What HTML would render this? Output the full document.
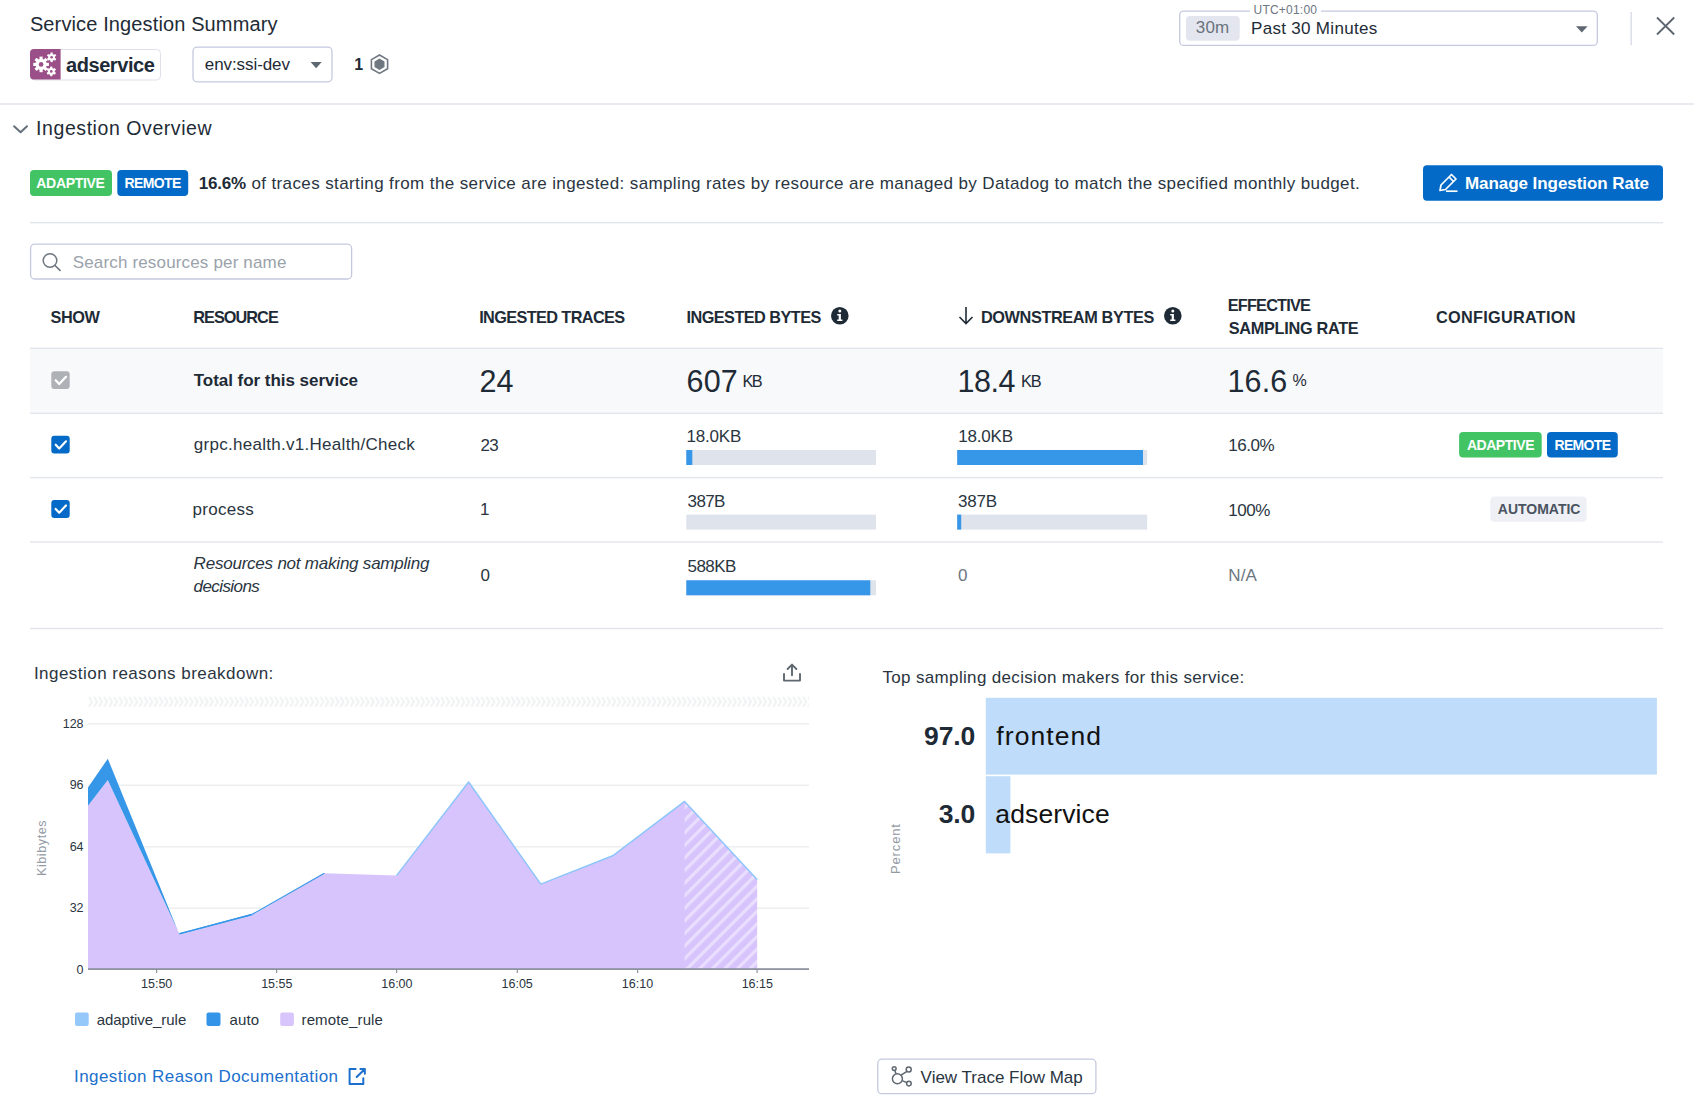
<!DOCTYPE html>
<html><head><meta charset="utf-8">
<style>
html,body{margin:0;padding:0;background:#fff;}
body{width:1694px;height:1114px;position:relative;overflow:hidden;font-family:"Liberation Sans",sans-serif;}
.t{position:absolute;white-space:nowrap;line-height:1;}
svg.bg{position:absolute;left:0;top:0;}
</style></head><body>
<svg class="bg" width="1694" height="1114" viewBox="0 0 1694 1114">
<defs>
  <pattern id="hatch" patternUnits="userSpaceOnUse" width="8.9" height="10" patternTransform="translate(684.6 969) rotate(45)">
    <rect width="8.9" height="10" fill="#d7c4fc"/>
    <rect x="0" y="0" width="3.2" height="10" fill="#e9defd"/>
  </pattern>
  <pattern id="chev" patternUnits="userSpaceOnUse" width="5.03" height="11" x="88" y="696.3">
    <path d="M0.8 0.5 L4 5.5 L0.8 10.5" fill="none" stroke="#f1f2f3" stroke-width="2.2"/>
  </pattern>
</defs>
<!-- header -->
<rect x="30.5" y="49.5" width="130" height="30.5" rx="4" fill="#fff" stroke="#dfe1ea"/>
<path d="M34 49 H60.6 V79.6 H34 A4 4 0 0 1 30 75.6 V53 A4 4 0 0 1 34 49 Z" fill="#9a4f88"/>
<g fill="#fff">
  <circle cx="41.1" cy="64.4" r="5.6"/>
  <g transform="translate(41.1 64.4)">
    <rect x="-1.6" y="-7.8" width="3.2" height="15.6"/>
    <rect x="-1.6" y="-7.8" width="3.2" height="15.6" transform="rotate(45)"/>
    <rect x="-1.6" y="-7.8" width="3.2" height="15.6" transform="rotate(90)"/>
    <rect x="-1.6" y="-7.8" width="3.2" height="15.6" transform="rotate(135)"/>
  </g>
  <circle cx="51.6" cy="57.3" r="3.4"/>
  <g transform="translate(51.6 57.3)">
    <rect x="-1.1" y="-4.8" width="2.2" height="9.6"/>
    <rect x="-1.1" y="-4.8" width="2.2" height="9.6" transform="rotate(60)"/>
    <rect x="-1.1" y="-4.8" width="2.2" height="9.6" transform="rotate(120)"/>
  </g>
  <circle cx="51.3" cy="71.4" r="3.4"/>
  <g transform="translate(51.3 71.4)">
    <rect x="-1.1" y="-4.8" width="2.2" height="9.6"/>
    <rect x="-1.1" y="-4.8" width="2.2" height="9.6" transform="rotate(60)"/>
    <rect x="-1.1" y="-4.8" width="2.2" height="9.6" transform="rotate(120)"/>
  </g>
</g>
<circle cx="41.1" cy="64.4" r="2.3" fill="#9a4f88"/>
<circle cx="51.6" cy="57.3" r="1.3" fill="#9a4f88"/>
<circle cx="51.3" cy="71.4" r="1.3" fill="#9a4f88"/>

<rect x="193" y="47.2" width="139" height="34.6" rx="4" fill="#fff" stroke="#c5c9df" stroke-width="1.3"/>
<path d="M310.6 62 H321.7 L316.15 68.3 Z" fill="#5f6770"/>
<path d="M379.5 55 L387.6 59.6 V68.8 L379.5 73.4 L371.4 68.8 V59.6 Z" fill="none" stroke="#6f7780" stroke-width="1.6"/>
<path d="M379.5 58.6 L384.5 61.5 V67 L379.5 69.9 L374.5 67 V61.5 Z" fill="#6f7780"/>

<rect x="1179.7" y="11.1" width="417.6" height="34.3" rx="4" fill="#fff" stroke="#c5c9df" stroke-width="1.3"/>
<rect x="1250" y="8" width="71" height="6" fill="#fff"/>
<rect x="1186" y="16" width="53.7" height="24.7" rx="4" fill="#e3e6ee"/>
<path d="M1576 26.2 H1587.6 L1581.8 32.4 Z" fill="#5f6770"/>
<rect x="1630.4" y="12" width="1.6" height="33.4" fill="#dfe1ea"/>
<path d="M1657 17.5 L1674.2 34.5 M1674.2 17.5 L1657 34.5" stroke="#5d6670" stroke-width="1.8" fill="none"/>
<rect x="0" y="103.2" width="1694" height="1.6" fill="#e3e5ec"/>

<!-- section -->
<path d="M14.1 126.2 L20.6 132.3 L27 126.2" fill="none" stroke="#66707a" stroke-width="2" stroke-linecap="round" stroke-linejoin="round"/>
<rect x="30" y="170" width="82" height="26" rx="4" fill="#42c465"/>
<rect x="117.3" y="170" width="70.9" height="26" rx="4" fill="#036bc7"/>
<rect x="1423" y="165.2" width="240" height="35.6" rx="4" fill="#036bc7"/>
<g fill="none" stroke="#fff" stroke-width="1.7" stroke-linejoin="round">
  <path d="M1440 190.5 L1441 185 L1451.5 174.5 L1456 179 L1445.5 189.5 Z"/>
  <path d="M1449 177 L1453.5 181.5"/>
  <path d="M1446 191.2 H1457.5"/>
</g>
<rect x="30" y="222" width="1633" height="1.4" fill="#e3e5ec"/>
<rect x="30.6" y="244.2" width="321" height="34.8" rx="4" fill="#fff" stroke="#c5c9df" stroke-width="1.3"/>
<circle cx="50" cy="260.5" r="6.8" fill="none" stroke="#6f7780" stroke-width="1.5"/>
<path d="M55 265.5 L60 270.3" stroke="#6f7780" stroke-width="1.7" stroke-linecap="round"/>

<!-- table -->
<rect x="30" y="347.6" width="1633" height="1.4" fill="#e3e5ec"/>
<rect x="30" y="349" width="1633" height="64" fill="#f8f9fb"/>
<rect x="30" y="412.6" width="1633" height="1.4" fill="#e3e5ec"/>
<rect x="30" y="476.9" width="1633" height="1.4" fill="#e3e5ec"/>
<rect x="30" y="541.3" width="1633" height="1.4" fill="#e3e5ec"/>
<rect x="30" y="627.8" width="1633" height="1.4" fill="#e3e5ec"/>
<!-- info icons -->
<g>
  <circle cx="839.8" cy="315.8" r="8.8" fill="#1e2b36"/>
  <circle cx="1172.8" cy="315.8" r="8.8" fill="#1e2b36"/>
  <g fill="#fff">
    <circle cx="839.8" cy="311" r="1.5"/><path d="M837.2 314 H840.9 V319.6 H842.4 V321 H837.2 V319.6 H838.7 V315.4 H837.2 Z"/>
    <circle cx="1172.8" cy="311" r="1.5"/><path d="M1170.2 314 H1173.9 V319.6 H1175.4 V321 H1170.2 V319.6 H1171.7 V315.4 H1170.2 Z"/>
  </g>
</g>
<path d="M966 307 V323.5 M959.5 317 L966 323.5 L972.5 317" fill="none" stroke="#1e2b36" stroke-width="1.6"/>
<!-- checkboxes -->
<rect x="51.3" y="371.3" width="18.4" height="17.8" rx="3" fill="#aeb2b7"/>
<rect x="51.3" y="435.8" width="18.4" height="17.8" rx="3" fill="#036bc7"/>
<rect x="51.3" y="500" width="18.4" height="18" rx="3" fill="#036bc7"/>
<g fill="none" stroke="#fff" stroke-width="2.2" stroke-linecap="round" stroke-linejoin="round">
  <path d="M55.7 380.2 L59.2 384 L66 376.8"/>
  <path d="M55.7 444.7 L59.2 448.5 L66 441.3"/>
  <path d="M55.7 508.9 L59.2 512.7 L66 505.5"/>
</g>
<!-- bars -->
<g fill="#dfe3ec">
  <rect x="686.3" y="450" width="189.7" height="15"/>
  <rect x="686.3" y="514.6" width="189.7" height="15"/>
  <rect x="686.3" y="580.3" width="189.7" height="15"/>
  <rect x="957.2" y="450" width="190" height="15"/>
  <rect x="957.2" y="514.6" width="190" height="15"/>
</g>
<g fill="#3696e8">
  <rect x="686.3" y="450" width="6" height="15"/>
  <rect x="686.3" y="580.3" width="184" height="15"/>
  <rect x="957.2" y="450" width="185.8" height="15"/>
  <rect x="957.2" y="514.6" width="4" height="15"/>
</g>
<rect x="1459.1" y="432" width="82.6" height="25.5" rx="4" fill="#42c465"/>
<rect x="1547" y="432" width="70.8" height="25.5" rx="4" fill="#036bc7"/>
<rect x="1490.3" y="496.5" width="96.3" height="25.2" rx="4" fill="#eef0f5"/>

<!-- left chart -->
<g fill="none" stroke="#5f6770" stroke-width="1.9" stroke-linecap="round" stroke-linejoin="round">
  <path d="M792 675.2 V664.6 M787.6 669 L792 664.6 L796.4 669"/>
  <path d="M784 674 V680.6 H800 V674"/>
</g>
<rect x="88" y="696.5" width="721" height="10.5" fill="url(#chev)"/>
<g fill="#eeeff0">
  <rect x="88" y="723" width="721" height="1.6"/>
  <rect x="88" y="784.5" width="721" height="1.6"/>
  <rect x="88" y="846" width="721" height="1.6"/>
  <rect x="88" y="907.4" width="721" height="1.6"/>
</g>
<path d="M88,805.8 L107.8,780 L179.6,934.4 L251.5,915.6 L324.3,873.3 L396.5,875.6 L468.6,782 L540.8,884.1 L612.7,855.8 L684.6,801.4 L757.1,879.4 L757.1,969.0 L88,969.0 Z" fill="#d7c4fc"/>
<path d="M684.6,801.4 L757.1,879.4 L757.1,969.0 L684.6,969.0 Z" fill="url(#hatch)"/>
<path d="M88,787.5 L107.8,758.7 L179.0,933.6 L251.5,913.8 L251.5,915.6 L179.6,934.4 L107.8,780 L88,805.8 Z" fill="#3696e8"/>
<path d="M396.5,875.6 L468.6,782 L540.8,884.1 L612.7,855.8 L684.6,801.4 L757.1,879.4" fill="none" stroke="#8ec6fb" stroke-width="1.5" stroke-linejoin="round"/>
<path d="M179.3,933.6 L251.8,914.6 L324.3,873.3" fill="none" stroke="#3696e8" stroke-width="1.2"/>
<rect x="88" y="968.2" width="721" height="1.8" fill="#8d93a0"/>
<g fill="#8d93a0">
  <rect x="156" y="969" width="1.2" height="4"/>
  <rect x="276" y="969" width="1.2" height="4"/>
  <rect x="396" y="969" width="1.2" height="4"/>
  <rect x="516.7" y="969" width="1.2" height="4"/>
  <rect x="637" y="969" width="1.2" height="4"/>
  <rect x="756.5" y="969" width="1.2" height="4"/>
</g>
<rect x="75" y="1012.4" width="13.7" height="13.7" rx="2" fill="#94c8fb"/>
<rect x="206.5" y="1012.4" width="14" height="13.7" rx="2" fill="#3394e8"/>
<rect x="280.2" y="1012.4" width="13.7" height="13.7" rx="2" fill="#d7c5fb"/>
<g fill="none" stroke="#1c6fcd" stroke-width="2" stroke-linecap="round" stroke-linejoin="round">
  <path d="M355.6 1069.1 H349.6 V1084.1 H363.3 V1078.2"/>
  <path d="M360.4 1069.1 H364.8 V1073.7 M364.6 1069.3 L356.7 1077"/>
</g>

<!-- right chart -->
<rect x="985.8" y="697.8" width="671.1" height="76.8" fill="#bfdcfa"/>
<rect x="985.8" y="776.2" width="24.6" height="77.2" fill="#bfdcfa"/>
<rect x="877.8" y="1059.2" width="218.1" height="34.5" rx="4" fill="#fff" stroke="#c5c9df" stroke-width="1.3"/>
<g fill="none" stroke="#5f6770" stroke-width="1.5">
  <circle cx="897.4" cy="1078.7" r="5"/>
  <circle cx="894.2" cy="1068.6" r="1.9"/>
  <circle cx="908.7" cy="1069.5" r="2.5"/>
  <circle cx="908.9" cy="1083.6" r="2.3"/>
  <path d="M894.8 1070.4 L896 1073.8 M907 1071.3 L901 1075.2 M906.8 1082.6 L902.2 1080.6"/>
</g>
</svg>
<div class="t" style="left:29.90px;top:13.87px;font-size:20px;color:#1e2b36;letter-spacing:0.127px;">Service Ingestion Summary</div>
<div class="t" style="left:66.00px;top:54.87px;font-size:20px;color:#1e2b36;font-weight:700;letter-spacing:-0.434px;">adservice</div>
<div class="t" style="left:204.80px;top:56.11px;font-size:17px;color:#1e2b36;letter-spacing:-0.078px;">env:ssi-dev</div>
<div class="t" style="left:354.30px;top:56.96px;font-size:16px;color:#1e2b36;font-weight:700;">1</div>
<div class="t" style="left:1253.50px;top:3.64px;font-size:12px;color:#6c7681;letter-spacing:0.222px;">UTC+01:00</div>
<div class="t" style="left:1195.80px;top:18.91px;font-size:17px;color:#6a737d;letter-spacing:0.145px;">30m</div>
<div class="t" style="left:1251.00px;top:20.21px;font-size:17px;color:#1e2b36;letter-spacing:0.307px;">Past 30 Minutes</div>
<div class="t" style="left:36.10px;top:118.69px;font-size:19.5px;color:#1e2b36;letter-spacing:0.568px;">Ingestion Overview</div>
<div class="t" style="left:36.30px;top:176.15px;font-size:14px;color:#fff;font-weight:700;letter-spacing:-0.307px;">ADAPTIVE</div>
<div class="t" style="left:124.40px;top:176.15px;font-size:14px;color:#fff;font-weight:700;letter-spacing:-0.590px;">REMOTE</div>
<div class="t" style="left:198.80px;top:174.91px;font-size:17px;color:#1e2b36;font-weight:700;letter-spacing:-0.197px;">16.6%</div>
<div class="t" style="left:251.40px;top:174.91px;font-size:17px;color:#2a3541;letter-spacing:0.386px;">of traces starting from the service are ingested: sampling rates by resource are managed by Datadog to match the specified monthly budget.</div>
<div class="t" style="left:1465.00px;top:175.01px;font-size:17px;color:#fff;font-weight:700;letter-spacing:-0.059px;">Manage Ingestion Rate</div>
<div class="t" style="left:72.70px;top:253.81px;font-size:17px;color:#9aa2ab;letter-spacing:0.162px;">Search resources per name</div>
<div class="t" style="left:50.40px;top:308.50px;font-size:16.3px;color:#1e2b36;font-weight:700;letter-spacing:-0.360px;">SHOW</div>
<div class="t" style="left:193.20px;top:308.50px;font-size:16.3px;color:#1e2b36;font-weight:700;letter-spacing:-0.959px;">RESOURCE</div>
<div class="t" style="left:479.20px;top:308.50px;font-size:16.3px;color:#1e2b36;font-weight:700;letter-spacing:-0.623px;">INGESTED TRACES</div>
<div class="t" style="left:686.50px;top:308.50px;font-size:16.3px;color:#1e2b36;font-weight:700;letter-spacing:-0.552px;">INGESTED BYTES</div>
<div class="t" style="left:980.90px;top:308.50px;font-size:16.3px;color:#1e2b36;font-weight:700;letter-spacing:-0.376px;">DOWNSTREAM BYTES</div>
<div class="t" style="left:1227.80px;top:297.10px;font-size:16.3px;color:#1e2b36;font-weight:700;letter-spacing:-0.812px;">EFFECTIVE</div>
<div class="t" style="left:1228.80px;top:319.90px;font-size:16.3px;color:#1e2b36;font-weight:700;letter-spacing:-0.309px;">SAMPLING RATE</div>
<div class="t" style="left:1436.00px;top:308.50px;font-size:16.3px;color:#1e2b36;font-weight:700;letter-spacing:0.266px;">CONFIGURATION</div>
<div class="t" style="left:193.70px;top:372.31px;font-size:17px;color:#1e2b36;font-weight:700;letter-spacing:-0.031px;">Total for this service</div>
<div class="t" style="left:479.40px;top:366.38px;font-size:30.5px;color:#1e2b36;letter-spacing:0.037px;">24</div>
<div class="t" style="left:686.60px;top:366.38px;font-size:30.5px;color:#1e2b36;letter-spacing:0.087px;">607</div>
<div class="t" style="left:742.50px;top:372.90px;font-size:16.3px;color:#1e2b36;letter-spacing:-1.559px;">KB</div>
<div class="t" style="left:957.50px;top:366.38px;font-size:30.5px;color:#1e2b36;letter-spacing:-0.466px;">18.4</div>
<div class="t" style="left:1021.00px;top:372.90px;font-size:16.3px;color:#1e2b36;letter-spacing:-1.159px;">KB</div>
<div class="t" style="left:1227.60px;top:366.38px;font-size:30.5px;color:#1e2b36;letter-spacing:0.067px;">16.6</div>
<div class="t" style="left:1292.60px;top:373.16px;font-size:16px;color:#1e2b36;">%</div>
<div class="t" style="left:193.70px;top:436.41px;font-size:17px;color:#2a3541;letter-spacing:0.290px;">grpc.health.v1.Health/Check</div>
<div class="t" style="left:480.40px;top:436.91px;font-size:17px;color:#2a3541;letter-spacing:-0.555px;">23</div>
<div class="t" style="left:686.60px;top:427.91px;font-size:17px;color:#2a3541;letter-spacing:-0.205px;">18.0KB</div>
<div class="t" style="left:958.30px;top:427.91px;font-size:17px;color:#2a3541;letter-spacing:-0.205px;">18.0KB</div>
<div class="t" style="left:1228.30px;top:436.91px;font-size:17px;color:#2a3541;letter-spacing:-0.447px;">16.0%</div>
<div class="t" style="left:192.60px;top:501.11px;font-size:17px;color:#2a3541;letter-spacing:0.279px;">process</div>
<div class="t" style="left:480.10px;top:501.11px;font-size:17px;color:#2a3541;">1</div>
<div class="t" style="left:687.60px;top:492.61px;font-size:17px;color:#2a3541;letter-spacing:-0.655px;">387B</div>
<div class="t" style="left:957.90px;top:492.71px;font-size:17px;color:#2a3541;letter-spacing:-0.188px;">387B</div>
<div class="t" style="left:1228.30px;top:501.51px;font-size:17px;color:#2a3541;letter-spacing:-0.455px;">100%</div>
<div class="t" style="left:193.60px;top:555.11px;font-size:17px;color:#2a3541;font-style:italic;letter-spacing:-0.219px;">Resources not making sampling</div>
<div class="t" style="left:193.60px;top:578.01px;font-size:17px;color:#2a3541;font-style:italic;letter-spacing:-0.584px;">decisions</div>
<div class="t" style="left:480.50px;top:566.91px;font-size:17px;color:#2a3541;">0</div>
<div class="t" style="left:687.60px;top:557.91px;font-size:17px;color:#2a3541;letter-spacing:-0.576px;">588KB</div>
<div class="t" style="left:958.10px;top:567.21px;font-size:17px;color:#6c7681;">0</div>
<div class="t" style="left:1228.30px;top:567.11px;font-size:17px;color:#6c7681;letter-spacing:0.150px;">N/A</div>
<div class="t" style="left:33.90px;top:665.41px;font-size:17px;color:#2a3541;letter-spacing:0.467px;">Ingestion reasons breakdown:</div>
<div class="t" style="left:74.00px;top:1068.31px;font-size:17px;color:#1c6fcd;letter-spacing:0.437px;">Ingestion Reason Documentation</div>
<div class="t" style="left:96.70px;top:1012.30px;font-size:15px;color:#2a3541;letter-spacing:-0.044px;">adaptive_rule</div>
<div class="t" style="left:229.60px;top:1012.30px;font-size:15px;color:#2a3541;letter-spacing:0.083px;">auto</div>
<div class="t" style="left:301.50px;top:1012.30px;font-size:15px;color:#2a3541;letter-spacing:0.140px;">remote_rule</div>
<div class="t" style="left:882.50px;top:668.71px;font-size:17px;color:#2a3541;letter-spacing:0.335px;">Top sampling decision makers for this service:</div>
<div class="t" style="left:924.10px;top:722.87px;font-size:26.5px;color:#1e2b36;font-weight:700;letter-spacing:-0.113px;">97.0</div>
<div class="t" style="left:996.30px;top:722.87px;font-size:26.5px;color:#111;letter-spacing:1.071px;">frontend</div>
<div class="t" style="left:938.70px;top:801.27px;font-size:26.5px;color:#1e2b36;font-weight:700;letter-spacing:-0.100px;">3.0</div>
<div class="t" style="left:995.30px;top:801.27px;font-size:26.5px;color:#111;letter-spacing:0.128px;">adservice</div>
<div class="t" style="left:920.60px;top:1068.61px;font-size:17px;color:#2a3541;">View Trace Flow Map</div>
<div class="t" style="left:1466.90px;top:437.95px;font-size:14px;color:#fff;font-weight:700;letter-spacing:-0.450px;">ADAPTIVE</div>
<div class="t" style="left:1554.50px;top:437.95px;font-size:14px;color:#fff;font-weight:700;letter-spacing:-0.670px;">REMOTE</div>
<div class="t" style="left:1497.80px;top:502.35px;font-size:14px;color:#4a5461;font-weight:700;letter-spacing:-0.010px;">AUTOMATIC</div>
<div class="t" style="left:62.70px;top:717.92px;font-size:12.5px;color:#2a3541;">128</div>
<div class="t" style="left:69.65px;top:779.42px;font-size:12.5px;color:#2a3541;">96</div>
<div class="t" style="left:69.65px;top:840.92px;font-size:12.5px;color:#2a3541;">64</div>
<div class="t" style="left:69.65px;top:902.32px;font-size:12.5px;color:#2a3541;">32</div>
<div class="t" style="left:76.60px;top:963.92px;font-size:12.5px;color:#2a3541;">0</div>
<div class="t" style="left:141.04px;top:978.22px;font-size:12.5px;color:#2a3541;">15:50</div>
<div class="t" style="left:261.14px;top:978.22px;font-size:12.5px;color:#2a3541;">15:55</div>
<div class="t" style="left:381.24px;top:978.22px;font-size:12.5px;color:#2a3541;">16:00</div>
<div class="t" style="left:501.54px;top:978.22px;font-size:12.5px;color:#2a3541;">16:05</div>
<div class="t" style="left:621.84px;top:978.22px;font-size:12.5px;color:#2a3541;">16:10</div>
<div class="t" style="left:741.64px;top:978.22px;font-size:12.5px;color:#2a3541;">16:15</div>
<div class="t" style="left:36px;top:876px;font-size:12.5px;color:#939aa4;transform-origin:0 0;transform:rotate(-90deg);letter-spacing:0.6px;">Kibibytes</div>
<div class="t" style="left:888.5px;top:874px;font-size:13px;color:#939aa4;transform-origin:0 0;transform:rotate(-90deg);letter-spacing:0.85px;">Percent</div>
<!--AXIS-->
</body></html>
